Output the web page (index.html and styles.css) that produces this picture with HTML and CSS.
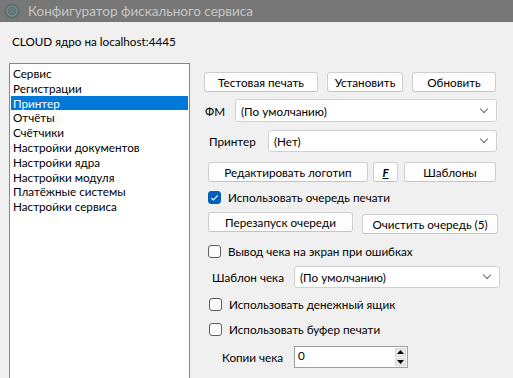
FILE: index.html
```html
<!DOCTYPE html>
<html lang="ru">
<head>
    <meta charset="UTF-8">
    <title>Конфигуратор фискального сервиса</title>
    <link rel="stylesheet" href="styles.css">
</head>
<body>

<div class="titlebar">
    <svg class="app-icon" width="16" height="16" viewBox="0 0 16 16">
        <circle cx="8" cy="8" r="7.5" fill="#5d6e72"/>
        <circle cx="8" cy="8" r="5" fill="none" stroke="#7d8f93" stroke-width="1.2"/>
        <path d="M3 8h10M8 3v10M4.5 4.5l7 7M11.5 4.5l-7 7" stroke="#6f8387" stroke-width="0.8"/>
    </svg>
    <span class="title-text">Конфигуратор фискального сервиса</span>
</div>

<div class="header">CLOUD ядро на localhost:4445</div>

<div class="main">
    <ul class="nav-list">
        <li>Сервис</li>
        <li>Регистрации</li>
        <li class="selected">Принтер</li>
        <li>Отчёты</li>
        <li>Счётчики</li>
        <li>Настройки документов</li>
        <li>Настройки ядра</li>
        <li>Настройки модуля</li>
        <li>Платёжные системы</li>
        <li>Настройки сервиса</li>
    </ul>

    <div class="panel">
        <div class="row row-top">
            <button class="btn btn-test">Тестовая печать</button>
            <button class="btn btn-set">Установить</button>
            <button class="btn btn-refresh">Обновить</button>
        </div>

        <div class="row row-fm">
            <span class="label label-fm">ФМ</span>
            <div class="select select-fm">(По умолчанию)<span class="chevron"></span></div>
        </div>

        <div class="row row-printer">
            <span class="label label-printer">Принтер</span>
            <div class="select select-printer">(Нет)<span class="chevron"></span></div>
        </div>

        <div class="row row-logo">
            <button class="btn btn-logo">Редактировать логотип</button>
            <button class="btn btn-font">F</button>
            <button class="btn btn-templates">Шаблоны</button>
        </div>

        <div class="row row-check check-queue">
            <span class="checkbox checked">
                <svg width="13" height="13" viewBox="0 0 13 13"><path d="M3.2 6.8l2.2 2.2 4.4-4.6" fill="none" stroke="#fff" stroke-width="1.1"/></svg>
            </span>
            <span class="check-label">Использовать очередь печати</span>
        </div>

        <div class="row row-queue">
            <button class="btn btn-restart">Перезапуск очереди</button>
            <button class="btn btn-clear">Очистить очередь (5)</button>
        </div>

        <div class="row row-check check-screen">
            <span class="checkbox"></span>
            <span class="check-label">Вывод чека на экран при ошибках</span>
        </div>

        <div class="row row-template">
            <span class="label label-template">Шаблон чека</span>
            <div class="select select-template">(По умолчанию)<span class="chevron"></span></div>
        </div>

        <div class="row row-check check-drawer">
            <span class="checkbox"></span>
            <span class="check-label">Использовать денежный ящик</span>
        </div>

        <div class="row row-check check-buffer">
            <span class="checkbox"></span>
            <span class="check-label">Использовать буфер печати</span>
        </div>

        <div class="row row-copies">
            <span class="label label-copies">Копии чека</span>
            <div class="spinbox">
                <span class="spin-value">0</span>
                <div class="spin-buttons">
                    <span class="spin-btn"><svg width="7" height="4" viewBox="0 0 7 4"><path d="M3.5 0L7 4H0z" fill="#000"/></svg></span>
                    <span class="spin-btn"><svg width="7" height="4" viewBox="0 0 7 4"><path d="M0 0h7L3.5 4z" fill="#000"/></svg></span>
                </div>
            </div>
        </div>
    </div>
</div>

</body>
</html>
```

FILE: styles.css
```css
:root {
    --window-bg: #f0f0f0;
    --title-bg: #777777;
    --title-text: #c6c6c6;
    --control-border: #d0d0d0;
    --list-border: #828790;
    --accent: #0078d7;
    --check-blue: #005fb8;
}

* {
    margin: 0;
    padding: 0;
    box-sizing: border-box;
}

body {
    font-family: Lato, "Noto Sans", sans-serif;
    font-size: 11.7px;
    color: #000;
    background: var(--window-bg);
    width: 513px;
    height: 378px;
    overflow: hidden;
}

/* title bar */
.titlebar {
    height: 22px;
    background: var(--title-bg);
    display: flex;
    align-items: center;
    padding-left: 4px;
}

.app-icon {
    margin-right: 8px;
}

.title-text {
    color: var(--title-text);
    font-size: 13.5px;
}

.header {
    height: 41px;
    padding: 12px 0 0 12px;
}

/* left list + right panel */
.main {
    display: flex;
    padding-left: 9px;
}

.nav-list {
    list-style: none;
    width: 181px;
    height: 330px;
    background: #fff;
    border: 1px solid var(--list-border);
    padding: 2px 1px 0 1px;
}

.nav-list li {
    height: 14.8px;
    line-height: 14.8px;
    padding-left: 2px;
    white-space: nowrap;
}

.nav-list li.selected {
    background: var(--accent);
    color: #fff;
}

.panel {
    margin-left: 14px;
    display: flex;
    flex-direction: column;
    width: 300px;
}

.row {
    display: flex;
    align-items: center;
}

.btn {
    font-family: inherit;
    font-size: inherit;
    height: 20px;
    background: #fdfdfd;
    border: 1px solid var(--control-border);
    border-bottom-color: #c4c4c4;
    border-radius: 3px;
    color: #000;
}

.row-top { margin-top: 9px; height: 20px; }
.btn-test { width: 114px; }
.btn-set { width: 76px; margin-left: 9px; }
.btn-refresh { width: 84px; margin-left: 9px; }

.label {
    white-space: nowrap;
}

.select {
    background: #fff;
    border: 1px solid var(--control-border);
    border-radius: 3px;
    padding-left: 5px;
    display: flex;
    align-items: center;
    position: relative;
    white-space: nowrap;
}

.chevron {
    position: absolute;
    right: 9px;
    top: 50%;
    width: 6px;
    height: 6px;
    margin-top: -5px;
    border-right: 1px solid #6d6d6d;
    border-bottom: 1px solid #6d6d6d;
    transform: rotate(45deg);
}

.row-fm { margin-top: 7px; height: 23px; }
.label-fm { margin-left: 1px; width: 30px; }
.select-fm { width: 262px; height: 23px; }

.row-printer { margin-top: 8px; height: 22px; }
.label-printer { margin-left: 5px; width: 59px; }
.select-printer { width: 229px; height: 22px; }

.row-logo { margin-top: 10px; height: 20px; padding-left: 4px; }
.btn-logo { width: 160px; }
.btn-font {
    width: 25px;
    margin-left: 5px;
    font-weight: bold;
    font-style: italic;
    text-decoration: underline;
}
.btn-templates { width: 92px; margin-left: 6px; }

/* checkboxes */
.row-check { height: 18px; padding-left: 4px; }

.checkbox {
    width: 13px;
    height: 13px;
    border: 1px solid #5f5f5f;
    border-radius: 3px;
    background: #fbfbfb;
    display: flex;
}

.checkbox.checked {
    background: var(--check-blue);
    border-color: var(--check-blue);
}

.checkbox svg {
    margin: -1px;
}

.check-label {
    margin-left: 7px;
    white-space: nowrap;
}

.check-queue { margin-top: 6px; }

.row-queue { margin-top: 6px; height: 22px; padding-left: 4px; align-items: flex-start; }
.btn-restart { width: 145px; }
.btn-clear { width: 136px; margin-left: 9px; margin-top: 2px; }

.check-screen { margin-top: 8px; }

.row-template { margin-top: 6px; height: 22px; }
.label-template { margin-left: 8px; width: 82px; }
.select-template { width: 206px; height: 22px; }

.check-drawer { margin-top: 7px; padding-left: 5px; }
.check-buffer { margin-top: 7px; padding-left: 5px; }

.row-copies { margin-top: 8px; height: 22px; }
.label-copies { margin-left: 18px; width: 72px; }

.spinbox {
    width: 114px;
    height: 22px;
    background: #fff;
    border: 1px solid #a0a0a0;
    display: flex;
    justify-content: space-between;
    padding: 1px;
}

.spin-value {
    padding: 0 0 0 2px;
    line-height: 14px;
}

.spin-buttons {
    display: flex;
    flex-direction: column;
    gap: 1px;
    width: 11px;
}

.spin-btn {
    flex: 1;
    background: #e9e9e9;
    border: 1px solid #dadada;
    display: flex;
    align-items: center;
    justify-content: center;
}
```
